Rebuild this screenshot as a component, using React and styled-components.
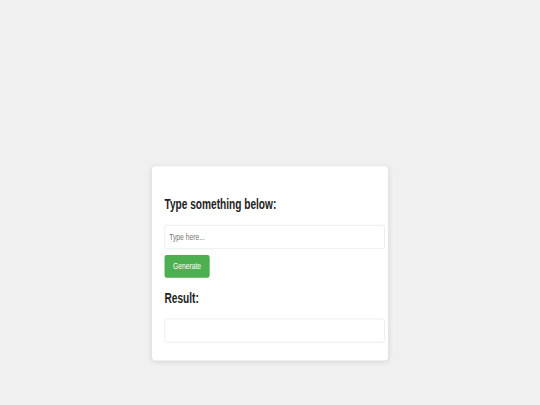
import React, { useState } from 'react'
import styled, { createGlobalStyle } from 'styled-components'

// The reference is a 1280x675 page photographed into 540x405,
// so the stage is laid out at its own size and squeezed to fit.
const STAGE_W = 1280
const STAGE_H = 675

const GlobalStyle = createGlobalStyle`
  html, body {
    margin: 0;
    padding: 0;
    overflow: hidden;
    background: #f0f0f0;
  }
`

const Viewport = styled.div`
  width: 100vw;
  height: 100vh;
  overflow: hidden;
  background: #f0f0f0;
`

const Stage = styled.div`
  width: ${STAGE_W}px;
  height: ${STAGE_H}px;
  transform: scale(${540 / STAGE_W}, ${405 / STAGE_H});
  transform-origin: 0 0;
  display: flex;
  justify-content: center;
  align-items: flex-start;
  padding-top: 277px;
  box-sizing: border-box;
  font-family: "Liberation Sans", Arial, sans-serif;
`

const Card = styled.div`
  width: 500px;
  padding: 30px;
  background: #ffffff;
  border-radius: 8px;
  box-shadow: 0 2px 10px rgba(0, 0, 0, 0.1);
`

const Heading = styled.h2`
  font-size: 24px;
  font-weight: bold;
  color: #222;
  margin: 19.92px 0;
`

const TextField = styled.input`
  width: 100%;
  padding: 10px;
  font-size: 16px;
  font-family: inherit;
  border: 1px solid #ddd;
  border-radius: 5px;
  margin-bottom: 10px;
  outline: none;
  color: #333;

  &::placeholder {
    color: #757575;
  }
`

const ResultBox = styled(TextField)`
  margin-bottom: 0;
`

const Button = styled.button`
  display: block;
  padding: 10px 20px;
  font-size: 16px;
  font-family: inherit;
  background: #4caf50;
  color: #ffffff;
  border: none;
  border-radius: 5px;
  cursor: pointer;
`

export default function App() {
  const [text, setText] = useState('')
  const [result, setResult] = useState('')

  return (
    <>
      <GlobalStyle />
      <Viewport>
        <Stage>
          <Card>
            <Heading>Type something below:</Heading>
            <TextField
              type="text"
              placeholder="Type here..."
              value={text}
              onChange={(e) => setText(e.target.value)}
            />
            <Button onClick={() => setResult(text)}>Generate</Button>
            <Heading>Result:</Heading>
            <ResultBox type="text" readOnly value={result} />
          </Card>
        </Stage>
      </Viewport>
    </>
  )
}
